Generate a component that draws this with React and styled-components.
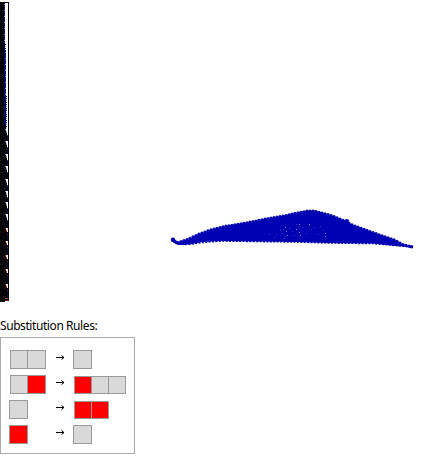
import React from 'react';
import styled, { createGlobalStyle } from 'styled-components';

const GlobalStyle = createGlobalStyle`
  body { margin: 0; background: #fff; color: #000; font-family: "Noto Sans", "Open Sans", sans-serif; }
`;
const Page = styled.main`
  width: 442px;
  height: 457px;
  overflow: hidden;
  display: flex;
  flex-direction: column;
`;
const Plots = styled.section`
  display: flex;
  justify-content: space-between;
  height: 318px;
  padding-right: 22px;
`;
const Evolution = styled.svg`
  width: 10px;
  height: 304px;
`;
const Surface = styled.svg`
  width: 255px;
  height: 60px;
  margin-top: 200px;
`;
const Title = styled.h1`
  margin: 0;
  height: 19px;
  font-size: 12px;
  line-height: 16px;
  font-weight: 400;
  white-space: nowrap;
  letter-spacing: -0.42px;
`;
const Panel = styled.section`
  box-sizing: border-box;
  width: 135px;
  height: 117px;
  border: 1px solid #aaa;
  padding: 9px 0 0 8px;
  display: grid;
  grid-template-rows: repeat(4, 25px);
`;
const Rule = styled.div`
  display: grid;
  grid-template-columns: 46px 18px 1fr;
  align-items: center;
`;
const Cells = styled.div`
  display: flex;
  padding-left: ${(p) => (p.$inset ? 1 : 0)}px;
`;
const Cell = styled.span`
  box-sizing: border-box;
  width: ${(p) => (p.$short ? 18 : 19)}px;
  height: ${(p) => (p.$short ? 18 : 19)}px;
  border: 1px solid #999;
  background: ${(p) => (p.$on ? '#fe0000' : '#d9d9d9')};
  &:not(:first-child) { margin-left: ${(p) => (p.$short ? -1 : -2)}px; }
`;
const Arrow = styled.svg`
  width: 10px;
  height: 7px;
  margin: 0 0 5px 0;
`;

const rules = [
  { from: [0, 0], to: [0], fromInset: true },
  { from: [0, 1], to: [1, 0, 0], fromInset: true, toInset: true, short: true },
  { from: [0], to: [1, 1], toInset: true, short: true },
  { from: [1], to: [0] },
];

const notches = [129, 141, 154, 166, 179, 191, 202, 214, 228, 241, 255, 269, 284];
const edgeDots = Array.from({ length: 62 }, (_, i) => 4 + i * 2);
const specks = Array.from({ length: 70 }, (_, i) => [(i * 7) % 5, 20 + i * 4]);
const surfaceRim = [
  [13, 42.5], [22, 39.5], [34, 34], [45, 30], [61, 26], [80, 23], [100, 19], [118, 16], [131, 13],
  [142, 11], [149, 11], [158, 13], [168, 16], [180, 21], [182, 21], [185, 24], [204, 31],
  [218, 36], [230, 40], [237, 44], [246, 46.5],
];
const holes = [
  [120, 27, 1], [118, 29, 0], [121, 31, 1], [117, 33, 0], [122, 35, 1], [119, 38, 0],
  [115, 30, 0], [111, 34, 0], [124, 28, 0], [127, 31, 0], [131, 24, 0], [134, 24, 1],
  [131, 29, 1], [134, 32, 1], [135, 35, 1], [137, 27, 0], [141, 33, 0], [144, 24, 1],
  [149, 27, 0], [155, 26, 0], [158, 30, 0], [160, 33, 1], [160, 36, 1], [153, 34, 0],
  [129, 35, 0], [109, 37, 0], [104, 34, 0], [146, 29, 0],
];

function EvolutionPlot() {
  return (
    <Evolution viewBox="0 0 10 304" shapeRendering="crispEdges">
      <path d="M0 2H9V301H5V302H0Z" fill="#050507" />
      <rect x="8" y="2" width="1" height="299" fill="#000" />
      {specks.map(([x, y]) => (
        <rect key={y} x={x} y={y} width="1" height="1" fill={y < 120 ? '#080830' : y < 190 ? '#182020' : '#380808'} />
      ))}
      <rect x="4" y="3" width="1" height="122" fill="#06065c" />
      <rect x="5" y="3" width="3" height="60" fill="#fff" />
      <rect x="5" y="50" width="1" height="75" fill="#08085c" />
      <rect x="6" y="63" width="2" height="42" fill="#fff" />
      <rect x="6" y="105" width="1" height="24" fill="#d8dcf8" />
      <rect x="7" y="105" width="1" height="24" fill="#fff" />
      <rect x="7" y="129" width="1" height="172" fill="#09093c" />
      {edgeDots.map((y, i) => (
        <rect key={y} x={y < 44 ? 4 : y < 96 ? 5 : 6} y={y} width="1" height="1" fill={i % 3 ? '#16168f' : '#7c8cd0'} />
      ))}
      {notches.map((y) => {
        const low = y > 220;
        return (
          <g key={y}>
            <rect x="5" y={y} width="1" height="1" fill={low ? '#8b302b' : '#8c92d8'} />
            <rect x="6" y={y} width="2" height="2" fill={low ? '#ffd8d2' : '#f4f5ff'} />
            <rect x="7" y={y + 2} width="1" height={low ? 2 : 4} fill={low ? '#fff0ee' : '#fff'} />
            <rect x="6" y={y + 2} width="1" height="2" fill={low ? '#9c3030' : '#8088cc'} />
            <rect x="7" y={y + 6} width="1" height="1" fill={low ? '#6c2020' : '#3940a0'} />
          </g>
        );
      })}
      <rect x="5" y="298" width="3" height="1" fill="#b84440" />
      <rect x="5" y="300" width="3" height="1" fill="#701818" />
    </Evolution>
  );
}

function rimPoints() {
  const points = [];
  for (let x = 16; x < 246; x += 3) {
    const k = surfaceRim.findIndex((p) => p[0] > x);
    const [ax, ay] = surfaceRim[k - 1];
    const [bx, by] = surfaceRim[k];
    points.push([x, ay + ((by - ay) * (x - ax)) / (bx - ax)]);
  }
  return points;
}

function SurfacePlot() {
  return (
    <Surface viewBox="0 0 255 60">
      <path
        d="M7 40L10 43L15 44L22 40L34 34L45 30L61 26L80 23L100 19L118 16L131 13L142 10.5L149 10.5L158 13L168 16L180 21L182 21L185 24L204 31L218 36L230 40L237 44L246 47L231 46L208 43.5L165 43L132 42L93 41.5L56 41L37 42L27 44L19 45L13 45L8 42Z"
        fill="#0000b4"
      />
      {rimPoints().map(([x, y]) => (
        <circle key={x} cx={x} cy={y + 0.2} r="1.6" fill="#0000b0" />
      ))}
      <path d="M246 47L231 45.5L208 43.5L165 43L132 42L93 41.5L56 41L37 42.5L27 44L19 44.5L13 44" fill="none" stroke="#0000b4" strokeWidth="1.6" strokeDasharray="2 1.4" />
      <circle cx="8" cy="39.8" r="2.2" fill="#0000a8" />
      <path d="M8 40Q11 43 14 43T22 41" fill="none" stroke="#0000b4" strokeWidth="3.2" />
      <circle cx="182" cy="21" r="2" fill="#0000b4" />
      <circle cx="246.5" cy="46.8" r="1.8" fill="#0000a8" />
      {holes.map(([x, y, bright]) => (
        <rect key={`${x}-${y}`} x={x} y={y} width="1" height="1" fill={bright ? '#8b8be8' : '#3434c6'} />
      ))}
    </Surface>
  );
}

export default function App() {
  return (
    <Page>
      <GlobalStyle />
      <Plots>
        <EvolutionPlot />
        <SurfacePlot />
      </Plots>
      <Title>Substitution Rules:</Title>
      <Panel>
        {rules.map((rule, r) => (
          <Rule key={r}>
            <Cells $inset={rule.fromInset}>
              {rule.from.map((on, i) => <Cell key={i} $on={on} />)}
            </Cells>
            <Arrow viewBox="0 0 10 7">
              <path d="M1 3.5H9M6.5 1.5L9 3.5L6.5 5.5" fill="none" stroke="#000" strokeWidth="1" />
            </Arrow>
            <Cells $inset={rule.toInset}>
              {rule.to.map((on, i) => <Cell key={i} $on={on} $short={rule.short} />)}
            </Cells>
          </Rule>
        ))}
      </Panel>
    </Page>
  );
}
